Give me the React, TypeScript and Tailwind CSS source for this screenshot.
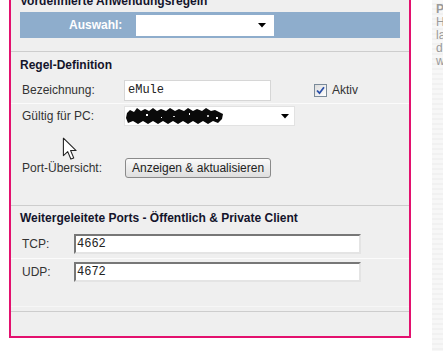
import React from 'react'

const label = 'text-[12px] text-[#333]'
const heading = 'text-[12px] font-bold text-[#14142b] leading-[14px] h-[14px] pl-[9px]'

function Cursor() {
  return (
    <svg className="absolute left-[62px] top-[137px]" width="16" height="24" viewBox="0 0 13 20">
      <path d="M1 1 L1 15.5 L4.6 12.2 L7.2 18.4 L9.6 17.4 L7 11.3 L11.6 11.3 Z" fill="#fff" stroke="#222" strokeWidth="0.9" strokeLinejoin="round" />
    </svg>
  )
}

function Redacted() {
  return (
    <svg width="98" height="16" viewBox="0 0 98 16" className="ml-[1px]">
      <path
        d="M1 5 L4 2 L8 4 L11 0 L15 3 L19 1 L23 3 L27 0 L31 3 L35 1 L40 3 L44 0 L49 3 L53 1 L58 3 L62 0 L67 3 L71 1 L76 3 L80 0 L85 3 L89 2 L93 4 L97 6 L96 11 L92 15 L87 13 L82 16 L77 13 L72 16 L67 13 L62 16 L57 13 L52 16 L47 13 L42 16 L37 13 L32 16 L27 13 L22 16 L17 13 L12 16 L7 13 L2 15 L0 10 Z"
        fill="#0a0a0a"
      />
      <rect x="20" y="6" width="2" height="2" fill="#fff" />
      <rect x="47" y="8" width="2" height="1" fill="#cfcfcf" />
      <rect x="63" y="5" width="1" height="2" fill="#fff" />
      <rect x="81" y="7" width="2" height="2" fill="#bdbdbd" />
      <rect x="35" y="9" width="1" height="1" fill="#fff" />
      <rect x="90" y="9" width="2" height="2" fill="#eee" />
    </svg>
  )
}

function Arrow() {
  return (
    <svg width="8" height="5" viewBox="0 0 8 5">
      <path d="M0 0 L8 0 L4 4.5 Z" fill="#000" />
    </svg>
  )
}

function Checkbox() {
  return (
    <div className="w-[13px] h-[13px] border border-[#7a8a99] bg-gradient-to-br from-[#dcdcdc] to-white flex items-center justify-center">
      <svg width="9" height="9" viewBox="0 0 9 9">
        <path d="M1 4.5 L3.5 7.2 L8 1.2" fill="none" stroke="#2a4fa8" strokeWidth="1.8" />
      </svg>
    </div>
  )
}

function PortInput({ value }: { value: string }) {
  return (
    <div className="w-[287px] h-[20px] bg-white border-2 border-t-[#777] border-l-[#777] border-r-[#e4e4e4] border-b-[#e4e4e4] flex items-center pl-[1px] font-['Liberation_Mono',monospace] text-[12px] text-[#222]">
      {value}
    </div>
  )
}

export default function App() {
  return (
    <div className="w-[443px] h-[351px] bg-white relative overflow-hidden flex font-['Liberation_Sans',Arial,sans-serif]">
      <div className="w-[9px] shrink-0" />

      {/* ── Rahmen ───────────────────────────── */}
      <div className="w-[402px] h-[338px] shrink-0 border-x-2 border-b-2 border-[#e3106e] bg-[#efefef] flex flex-col">
        <div className="h-[12px] pl-[9px]">
          <span className="block -mt-[6px] leading-[14px] text-[12px] font-bold text-[#14142b]">
            Vordefinierte Anwendungsregeln
          </span>
        </div>

        <div className="mx-[9px] h-[26px] bg-[#8eadcc] flex items-center">
          <span className="ml-[49px] w-[67px] text-[12px] font-bold text-white">Auswahl:</span>
          <div className="w-[138px] h-[21px] bg-white flex items-center justify-end pr-[8px]">
            <Arrow />
          </div>
        </div>

        <div className="mt-[13px] h-px bg-[#cdcdcd]" />

        {/* Regel-Definition */}
        <div className="pt-[6px]">
          <div className={heading}>Regel-Definition</div>

          <div className="mt-[5px] h-[26px] flex items-center pl-[11px]">
            <span className={`${label} w-[102px]`}>Bezeichnung:</span>
            <div className="w-[147px] h-[21px] bg-white border border-[#d6d6d6] flex items-center pl-[3px] font-['Liberation_Mono',monospace] text-[12px] text-[#222]">
              eMule
            </div>
            <div className="ml-[43px]">
              <Checkbox />
            </div>
            <span className={`${label} ml-[5px]`}>Aktiv</span>
          </div>
          <div className="h-px bg-[#fbfbfb]" />

          <div className="h-[24px] flex items-center pl-[11px]">
            <span className={`${label} w-[102px]`}>Gültig für PC:</span>
            <div className="w-[171px] h-[20px] bg-white border border-[#e2e2e2] flex items-center justify-between pr-[5px]">
              <Redacted />
              <Arrow />
            </div>
          </div>

          <div className="mt-[28px] h-[24px] flex items-center pl-[11px]">
            <span className={`${label} w-[103px]`}>Port-Übersicht:</span>
            <button className="h-[20px] px-[6px] rounded-[3px] border border-[#8a8a8a] bg-gradient-to-b from-[#fafafa] to-[#dedede] text-[12px] text-[#222] leading-none">
              Anzeigen &amp; aktualisieren
            </button>
          </div>
        </div>

        <div className="mt-[25px] h-px bg-[#cdcdcd]" />

        {/* Weitergeleitete Ports */}
        <div className="pt-[5px]">
          <div className={heading}>Weitergeleitete Ports - Öffentlich &amp; Private Client</div>

          <div className="mt-[5px] h-[28px] flex items-center pl-[11px]">
            <span className={`${label} w-[52px]`}>TCP:</span>
            <PortInput value="4662" />
          </div>
          <div className="h-px bg-[#fbfbfb]" />
          <div className="h-[26px] flex items-center pl-[11px]">
            <span className={`${label} w-[52px]`}>UDP:</span>
            <PortInput value="4672" />
          </div>
        </div>

        <div className="mt-[21px] h-px bg-[#f6f6f6]" />
        <div className="mt-[4px] h-px bg-[#cdcdcd]" />
      </div>

      <div className="w-[21px] shrink-0" />

      {/* Seitenleiste */}
      <div className="flex-1 h-full bg-[repeating-linear-gradient(180deg,#f7f7f7_0px,#f7f7f7_3px,#f1f1f1_3px,#f1f1f1_5px)] pl-[4px] pt-[3px] overflow-hidden text-[12px] leading-[13px] text-[#9a9a9a] whitespace-nowrap">
        <div className="font-bold">Port</div>
        <div>Hier</div>
        <div>lassen</div>
        <div>die</div>
        <div>weitere</div>
      </div>

      <Cursor />
    </div>
  )
}
